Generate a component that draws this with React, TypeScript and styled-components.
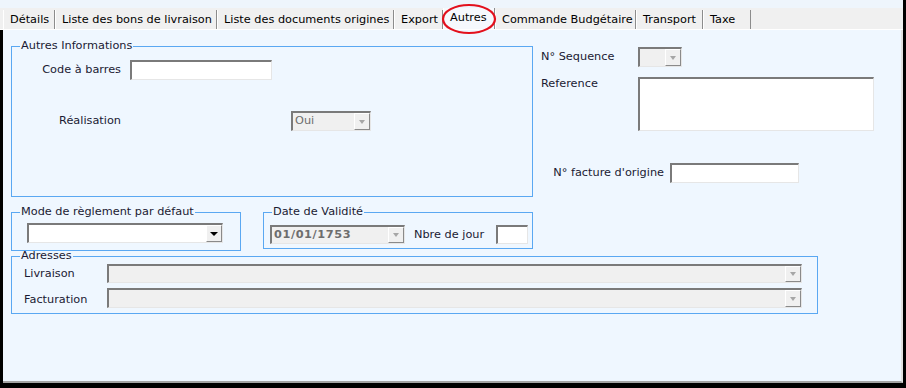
import React from "react";
import styled, { createGlobalStyle } from "styled-components";

const GlobalStyle = createGlobalStyle`
  html, body { margin: 0; padding: 0; background: #000; }
  * { box-sizing: border-box; }
`;

const font = `"DejaVu Sans", Verdana, sans-serif`;

const Window = styled.div`
  position: relative;
  width: 906px;
  height: 388px;
  background: #000;
  display: flex;
  flex-direction: column;
  font-family: ${font};
  font-size: 11.3px;
  color: #1a1a33;
`;

const TopStrip = styled.div`
  height: 8px;
  margin-right: 3px;
  background: #eef5fc;
`;

const TabBar = styled.div`
  display: flex;
  align-items: flex-end;
  height: 22px;
  margin-right: 3px;
  padding-left: 3px;
  background: #f0f0f0;
  border-bottom: 1px solid #fff;
`;

const Tab = styled.div<{ $w: number; $active?: boolean }>`
  width: ${p => p.$w}px;
  height: ${p => (p.$active ? 21 : 19)}px;
  padding-left: 6px;
  line-height: ${p => (p.$active ? "19px" : "20px")};
  white-space: nowrap;
  color: #000;
  border-left: 1px solid #fff;
  border-right: 1px solid #8c8c8c;
  background: ${p => (p.$active ? "#f6f9fd" : "#f0f0f0")};
`;

const Highlight = styled.svg`
  position: absolute;
  left: 441px;
  top: 3px;
  pointer-events: none;
`;

const Panel = styled.div`
  flex: 1;
  margin: 0 3px 5px 3px;
  padding: 9px 0 0 8px;
  background: #eff7ff;
  border-right: 2px solid #e2e2e2;
  border-bottom: 2px solid #a4a4a4;
`;

const Row = styled.div<{ $top?: number; $left?: number; $align?: string }>`
  display: flex;
  align-items: ${p => p.$align || "center"};
  margin-top: ${p => p.$top || 0}px;
  padding-left: ${p => p.$left || 0}px;
`;

const Group = styled.fieldset<{ $w: number; $h: number; $ml?: number; $mt?: number }>`
  width: ${p => p.$w}px;
  height: ${p => p.$h}px;
  margin: ${p => p.$mt || 0}px 0 0 ${p => p.$ml || 0}px;
  padding: 0;
  min-width: 0;
  border: 1px solid #5aa8f2;
`;

const Legend = styled.legend`
  margin-left: 8px;
  padding: 0 1px;
  line-height: 14px;
  color: #1a1a33;
`;

const Label = styled.span<{ $w: number; $right?: boolean; $ml?: number; $pt?: number }>`
  width: ${p => p.$w}px;
  margin-left: ${p => p.$ml || 0}px;
  padding-top: ${p => p.$pt || 0}px;
  flex-shrink: 0;
  line-height: 14px;
  white-space: nowrap;
  text-align: ${p => (p.$right ? "right" : "left")};
`;

const sunken = `
  border-style: solid;
  border-width: 2px 1px 1px 2px;
  border-color: #7a7a7a #e6e6e6 #e6e6e6 #7a7a7a;
`;

const TextBox = styled.input<{ $w: number; $h?: number; $ml?: number }>`
  ${sunken}
  width: ${p => p.$w}px;
  height: ${p => p.$h || 20}px;
  margin-left: ${p => p.$ml || 0}px;
  padding: 0 2px;
  background: #fff;
  font: inherit;
  outline: none;
`;

const MemoBox = styled.textarea<{ $w: number; $h: number }>`
  ${sunken}
  width: ${p => p.$w}px;
  height: ${p => p.$h}px;
  margin: 0;
  background: #fff;
  resize: none;
  font: inherit;
  outline: none;
`;

const Combo = styled.div<{ $w: number; $h?: number; $ml?: number; $white?: boolean }>`
  ${sunken}
  display: flex;
  width: ${p => p.$w}px;
  height: ${p => p.$h || 20}px;
  margin-left: ${p => p.$ml || 0}px;
  background: ${p => (p.$white ? "#fff" : "#f0f0f0")};
`;

const ComboText = styled.span<{ $bold?: boolean }>`
  flex: 1;
  padding-left: 2px;
  line-height: 16px;
  color: #6d6d6d;
  font-weight: ${p => (p.$bold ? "bold" : "normal")};
  letter-spacing: ${p => (p.$bold ? "0.6px" : "0")};
  white-space: nowrap;
  overflow: hidden;
`;

const ComboButton = styled.span`
  display: flex;
  align-items: center;
  justify-content: center;
  width: 16px;
  background: #f0f0f0;
  border: 1px solid;
  border-color: #fff #8a8a8a #8a8a8a #fff;
`;

const Arrow = styled.span<{ $dark?: boolean }>`
  width: 0;
  height: 0;
  border-left: ${p => (p.$dark ? 4 : 3.5)}px solid transparent;
  border-right: ${p => (p.$dark ? 4 : 3.5)}px solid transparent;
  border-top: 4px solid ${p => (p.$dark ? "#000" : "#a6a6a6")};
`;

const RightCol = styled.div`
  margin-left: 8px;
  padding-top: 8px;
`;

type ComboProps = {
  w: number;
  h?: number;
  ml?: number;
  text?: string;
  bold?: boolean;
  white?: boolean;
  dark?: boolean;
};

const Dropdown = ({ w, h, ml, text, bold, white, dark }: ComboProps) => (
  <Combo $w={w} $h={h} $ml={ml} $white={white}>
    <ComboText $bold={bold}>{text}</ComboText>
    <ComboButton>
      <Arrow $dark={dark} />
    </ComboButton>
  </Combo>
);

const tabs = [
  { label: "Détails", w: 52 },
  { label: "Liste des bons de livraison", w: 162 },
  { label: "Liste des documents origines", w: 177 },
  { label: "Export", w: 49 },
  { label: "Autres", w: 52, active: true },
  { label: "Commande Budgétaire", w: 141 },
  { label: "Transport", w: 67 },
  { label: "Taxe", w: 48 },
];

export default function App() {
  return (
    <Window>
      <GlobalStyle />
      <TopStrip />
      <TabBar>
        {tabs.map(t => (
          <Tab key={t.label} $w={t.w} $active={t.active}>
            {t.label}
          </Tab>
        ))}
      </TabBar>
      <Highlight width="56" height="32" viewBox="0 0 56 32">
        <ellipse cx="28" cy="16" rx="26" ry="14" fill="none" stroke="#e3101c" strokeWidth="2.2" />
      </Highlight>

      <Panel>
        <Row $align="flex-start">
          <Group $w={522} $h={158}>
            <Legend>Autres Informations</Legend>
            <Row $top={7}>
              <Label $w={109} $right>Code à barres</Label>
              <TextBox $w={142} $ml={9} readOnly />
            </Row>
            <Row $top={31}>
              <Label $w={109} $right>Réalisation</Label>
              <Dropdown w={80} ml={170} text="Oui" />
            </Row>
          </Group>

          <RightCol>
            <Row>
              <Label $w={97}>N° Sequence</Label>
              <Dropdown w={44} />
            </Row>
            <Row $top={10} $align="flex-start">
              <Label $w={97}>Reference</Label>
              <MemoBox $w={236} $h={54} readOnly />
            </Row>
            <Row $top={32}>
              <Label $w={123} $right>N° facture d'origine</Label>
              <TextBox $w={129} $ml={6} readOnly />
            </Row>
          </RightCol>
        </Row>

        <Row $top={8} $align="flex-start">
          <Group $w={230} $h={46}>
            <Legend>Mode de règlement par défaut</Legend>
            <Row $top={4} $left={15}>
              <Dropdown w={196} white dark />
            </Row>
          </Group>
          <Group $w={270} $h={44} $ml={22}>
            <Legend>Date de Validité</Legend>
            <Row $top={6} $left={6}>
              <Dropdown w={135} h={19} text="01/01/1753" bold />
              <Label $w={82} $ml={9}>Nbre de jour</Label>
              <TextBox $w={32} $h={19} readOnly />
            </Row>
          </Group>
        </Row>

        <Group $w={807} $h={65} $mt={-2}>
          <Legend>Adresses</Legend>
          <Row $top={1} $left={12}>
            <Label $w={83}>Livraison</Label>
            <Dropdown w={695} h={19} />
          </Row>
          <Row $top={5} $left={12}>
            <Label $w={83} $pt={4}>Facturation</Label>
            <Dropdown w={695} />
          </Row>
        </Group>
      </Panel>
    </Window>
  );
}
